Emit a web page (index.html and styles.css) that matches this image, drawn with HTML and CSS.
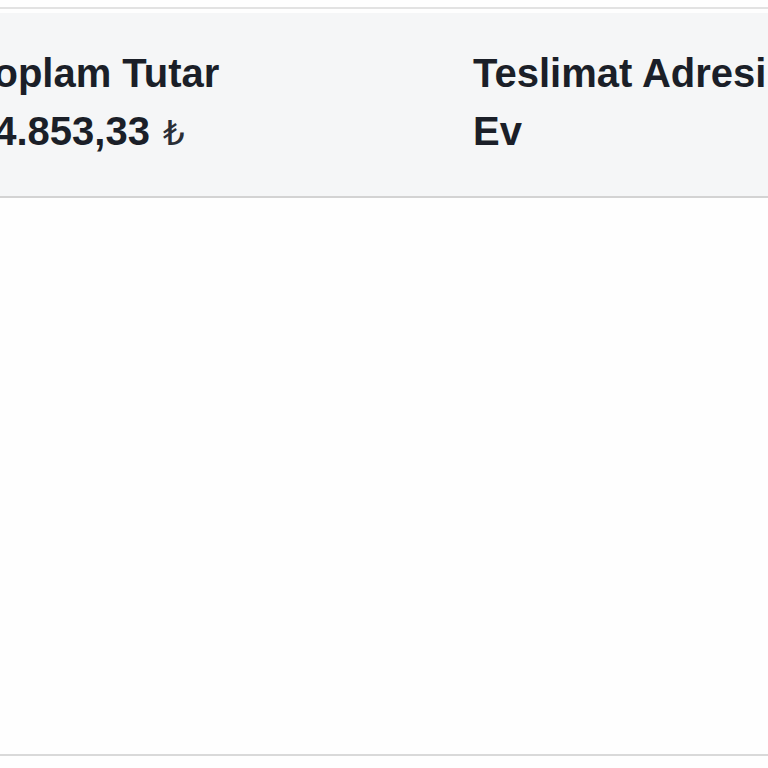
FILE: index.html
```html
<!DOCTYPE html>
<html lang="tr">
<head>
<meta charset="utf-8">
<title>Sipariş Özeti</title>
<link rel="stylesheet" href="styles.css">
</head>
<body>
<div class="card">
  <div class="summary">
    <div class="cell cell-total">
      <div class="label">Toplam Tutar</div>
      <div class="value">14.853,33 <span class="currency">₺</span></div>
    </div>
    <div class="cell">
      <div class="label">Teslimat Adresi</div>
      <div class="value">Ev</div>
    </div>
  </div>
  <div class="body-area"></div>
</div>
</body>
</html>
```

FILE: styles.css
```css
html, body {
  margin: 0;
  padding: 0;
  background: #fefefe;
  overflow: hidden;
  width: 768px;
  height: 768px;
}

body {
  font-family: "Liberation Sans", Arial, sans-serif;
  color: #1b1f28;
}

.card {
  margin-top: 7px;
  border-top: 2px solid #e2e2e2;
  padding-top: 4px;
  border-bottom: 2px solid #d9d9d9;
}

.summary {
  background: #f5f6f7;
  border-bottom: 2px solid #d3d3d3;
  height: 185px;
  box-sizing: border-box;
  padding-top: 31px;
  display: grid;
  grid-template-columns: 501px auto;
  margin-left: -28px;
  white-space: nowrap;
}

.label,
.value {
  font-size: 40px;
  font-weight: 700;
  line-height: 58px;
}

.currency {
  font-family: "DejaVu Sans", sans-serif;
  font-size: 34px;
  font-weight: 400;
  color: #2a2e36;
  margin-left: 2px;
}

.body-area {
  height: 556px;
  background: #fefefe;
}
```
